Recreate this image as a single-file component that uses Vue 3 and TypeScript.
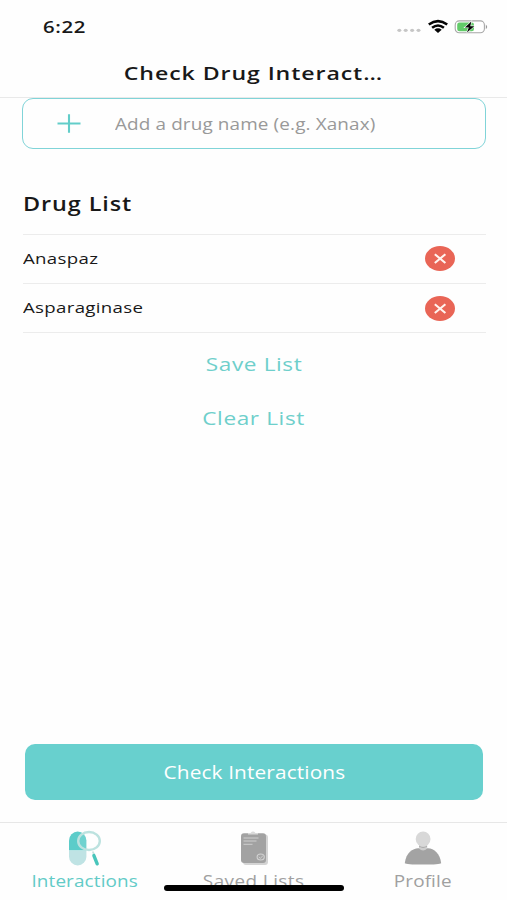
<script setup lang="ts">
import { ref } from 'vue'

const drugs = ref<string[]>(['Anaspaz', 'Asparaginase'])
const draft = ref('')

function addDrug() {
  const name = draft.value.trim()
  if (name) drugs.value.push(name)
  draft.value = ''
}
function removeDrug(index: number) {
  drugs.value.splice(index, 1)
}
function clearList() {
  drugs.value = []
}
</script>

<template>
  <div class="screen">
    <header class="top">
      <div class="status">
        <span class="wide time">6:22</span>
        <div class="indicators">
          <svg class="dots" width="24" height="16" viewBox="0 0 24 16">
            <g fill="#c6c6c6">
              <ellipse cx="2.3" cy="10.3" rx="2" ry="1.6" /><ellipse cx="8.7" cy="10.3" rx="2" ry="1.6" />
              <ellipse cx="15.1" cy="10.3" rx="2" ry="1.6" /><ellipse cx="21.5" cy="10.3" rx="2" ry="1.6" />
            </g>
          </svg>
          <svg class="wifi" width="20" height="13" viewBox="0 0 20 13">
            <g fill="none" stroke="#050505" stroke-width="2.6">
              <path d="M.8 4.5Q10-2.1 19.2 4.5" />
              <path d="M4.1 7.8Q10 3.2 15.9 7.8" />
            </g>
            <path d="M6.3 9.8Q10 6.9 13.7 9.8L10 12.9Z" fill="#050505" />
          </svg>
          <svg class="battery" width="34" height="14" viewBox="0 0 34 14">
            <rect x=".2" y=".9" width="29.2" height="11.8" rx="4" fill="#fff" stroke="#a7a7a7" stroke-width="1.1" />
            <path d="M30.8 4.4q2.8 2.4 0 4.8Z" fill="#999" />
            <rect x="2.2" y="2.5" width="16.8" height="8.7" rx="2.2" fill="#62cb69" />
            <path d="M16.3 1.6 9.9 7.5h3.9l-1.9 4.9 7.4-6.2h-4Z" fill="#080808" stroke="#fff" stroke-width="1.2" paint-order="stroke" />
          </svg>
        </div>
      </div>
      <h1><span class="wide">Check Drug Interact…</span></h1>
    </header>

    <main>
      <form class="search" @submit.prevent="addDrug">
        <button class="add" type="submit" aria-label="Add">
          <svg width="24" height="20" viewBox="0 0 24 20">
            <path d="M.5 9.5h23M12 .2v18.6" stroke="#62cdc9" stroke-width="2.1" fill="none" />
          </svg>
        </button>
        <input v-model="draft" class="wide" placeholder="Add a drug name (e.g. Xanax)" />
      </form>

      <h2><span class="wide">Drug List</span></h2>
      <ul class="drugs">
        <li v-for="(drug, i) in drugs" :key="drug">
          <span class="wide">{{ drug }}</span>
          <button type="button" aria-label="Remove" @click="removeDrug(i)">
            <svg width="30" height="25" viewBox="0 0 30 25">
              <ellipse cx="15" cy="12.5" rx="15" ry="12.4" fill="#e96556" />
              <path d="M9.8 8.2 20.4 17M20.4 8.2 9.8 17" stroke="#fff3ee" stroke-width="2.1" fill="none" />
            </svg>
          </button>
        </li>
      </ul>
      <div class="actions">
        <button type="button"><span class="wide">Save List</span></button>
        <button type="button" @click="clearList"><span class="wide">Clear List</span></button>
      </div>
      <button class="check" type="button"><span class="wide">Check Interactions</span></button>
    </main>

    <nav>
      <a class="tab active">
        <svg width="34" height="36" viewBox="0 0 34 36">
          <path d="M1 19.5V9.5a8.7 9 0 0 1 17.4 0v10Z" fill="#5cccc9" />
          <path d="M1 19.5h17.4v6.2a8.7 8.7 0 0 1-17.4 0Z" fill="#bfe3e4" />
          <ellipse cx="21" cy="10" rx="10.8" ry="9" fill="#fff" fill-opacity=".12" stroke="#bce2df" stroke-width="2.4" />
          <path d="M24.7 20.5l1.4 3.2" stroke="#c6e3df" stroke-width="1.8" />
          <path d="M25.9 24.6 29.2 32.8" stroke="#48c5bb" stroke-width="3.4" stroke-linecap="round" />
        </svg>
        <span class="wide">Interactions</span>
      </a>
      <a class="tab saved">
        <svg width="34" height="36" viewBox="0 0 34 36">
          <rect x="6" y="3.5" width="25" height="30.5" rx="3" fill="#d4d4d4" />
          <rect x="4" y="2.3" width="25" height="29.6" rx="3" fill="#a2a2a2" />
          <path d="M11 3.6V2h2.5Q16-.8 18.5 2H21v1.6Z" fill="#dadada" />
          <path d="M6.5 7h15M6.5 10h13M6.5 13.3h9" stroke="#cfcfcf" stroke-width="1" />
          <ellipse cx="23.7" cy="26" rx="3.6" ry="3" fill="#a5a5a5" stroke="#d2d2d2" stroke-width="1.1" />
          <path d="M21.8 26l1.5 1.3 2.6-2.5" fill="none" stroke="#d2d2d2" stroke-width=".9" />
        </svg>
        <span class="wide">Saved Lists</span>
      </a>
      <a class="tab">
        <svg width="38" height="36" viewBox="0 0 38 36">
          <path d="M.8 32.2C2 21.5 9 17.5 14 17.3h10c6 .4 12 5 13.2 14.9Q36 33.6 19 33.6 2 33.6.8 32.2Z" fill="#a3a3a3" />
          <path d="M15 13h8.2v4.6Q19 21.3 15 17.6Z" fill="#cecece" />
          <path d="M15.2 14.8q4 2.4 7.8 0v1q-4 2.2-7.8 0Z" fill="#aaa" />
          <ellipse cx="19.1" cy="8" rx="7.4" ry="7.4" fill="#d8d8d8" />
        </svg>
        <span class="wide">Profile</span>
      </a>
      <div class="home"></div>
    </nav>
  </div>
</template>

<style>
body {
  background: #fefefe;
}
</style>

<style scoped>
.screen {
  width: 507px;
  height: 900px;
  display: flex;
  flex-direction: column;
  overflow: hidden;
  background: #fefefe;
  color: #181818;
  font-family: 'Open Sans', 'Liberation Sans', sans-serif;
}
.wide {
  display: inline-block;
  white-space: nowrap;
  transform: scaleX(1.22);
}
button {
  border: 0;
  padding: 0;
  background: none;
  font: inherit;
  letter-spacing: inherit;
  color: inherit;
  display: block;
}
svg {
  display: block;
  overflow: visible;
}
.top {
  height: 97px;
  flex: none;
  border-bottom: 1px solid #e9e9e9;
}
.status {
  height: 53px;
  display: flex;
  align-items: center;
  justify-content: space-between;
  padding: 0 18px 0 42.5px;
}
.time {
  font-size: 16.7px;
  font-weight: 600;
  letter-spacing: 0.5px;
  transform-origin: left;
}
.indicators {
  display: flex;
  align-items: center;
}
.dots {
  margin: 2px 7px 0 0;
}
.wifi {
  margin-right: 7px;
}
h1 {
  margin: 0;
  text-align: center;
  font-size: 18.8px;
  line-height: 41px;
  font-weight: 600;
  letter-spacing: 0.75px;
}
h1 .wide {
  transform: scaleX(1.23);
}
main {
  flex: 1;
  display: flex;
  flex-direction: column;
  padding: 0 21px 0 22px;
}
.search {
  display: flex;
  align-items: center;
  height: 51px;
  flex: none;
  box-sizing: border-box;
  border: 1.5px solid #80d4d8;
  border-radius: 11px;
  padding-left: 34px;
}
.add {
  margin-right: 34px;
}
input {
  border: 0;
  outline: 0;
  padding: 0;
  background: none;
  width: 240px;
  font: 15.5px 'Open Sans', sans-serif;
  letter-spacing: 0.1px;
  transform-origin: left;
}
input::placeholder {
  color: #999;
  opacity: 1;
}
h2 {
  margin: 38px 0 13px 1px;
  font-size: 19px;
  line-height: 34px;
  font-weight: 600;
  letter-spacing: 0.75px;
}
h2 .wide,
.drugs .wide {
  transform-origin: left;
}
h2 .wide {
  transform: scaleX(1.23);
}
.drugs {
  list-style: none;
  margin: 0 0 0 1px;
  padding: 0;
  border-top: 1px solid #ececec;
}
.drugs li {
  display: flex;
  align-items: center;
  justify-content: space-between;
  height: 48px;
  padding-right: 31px;
  border-bottom: 1px solid #ececec;
  font-size: 15.3px;
  font-weight: 500;
  letter-spacing: 0.25px;
}
.drugs .wide {
  padding-bottom: 2px;
}
.drugs li:first-child button {
  margin-bottom: 1px;
}
.actions {
  display: flex;
  flex-direction: column;
  align-items: center;
  padding-top: 3px;
  color: #6ecfcb;
  font-size: 18.3px;
  font-weight: 500;
  letter-spacing: 0.5px;
}
.actions .wide {
  transform: scaleX(1.235);
}
.actions button {
  height: 54px;
}
.check {
  height: 56px;
  margin: auto 3px 22px 3px;
  border-radius: 10px;
  background: #68d0ce;
  color: #fff;
  font-size: 17.3px;
  font-weight: 500;
  letter-spacing: 0.1px;
}
.check .wide {
  transform: scaleX(1.205);
}
nav {
  position: relative;
  flex: none;
  height: 77px;
  border-top: 1px solid #e7e7e7;
  display: flex;
}
.tab {
  flex: 1;
  display: flex;
  flex-direction: column;
  align-items: center;
  padding-top: 8px;
  color: #a0a0a0;
  font-size: 15.5px;
  font-weight: 500;
  letter-spacing: 0.1px;
  line-height: 28px;
}
.saved {
  letter-spacing: 0.35px;
}
.active {
  color: #62cbc7;
}
.home {
  position: absolute;
  left: 164px;
  top: 62px;
  width: 180px;
  height: 6px;
  border-radius: 3px;
  background: #000;
}
</style>
